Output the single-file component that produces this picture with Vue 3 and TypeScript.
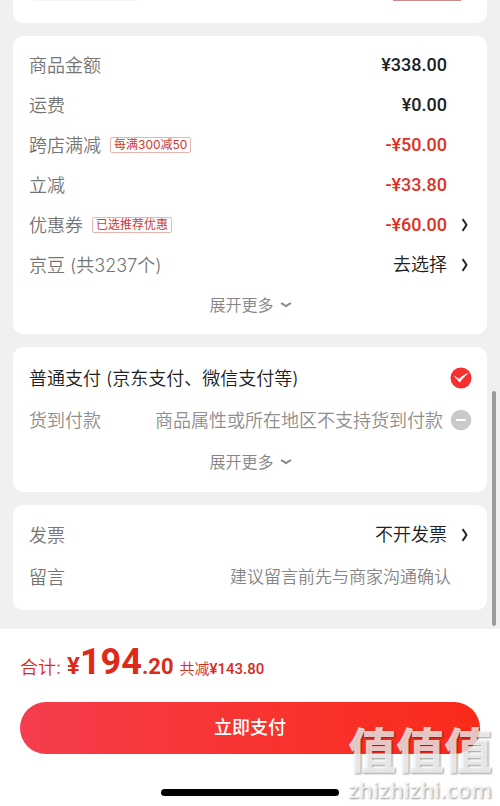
<script setup lang="ts">
import { ref } from 'vue'

interface PriceRow {
  label: string
  value: string
  badge?: string
  discount?: boolean
  link?: boolean
  plain?: boolean
}

const rows: PriceRow[] = [
  { label: '商品金额', value: '¥338.00' },
  { label: '运费', value: '¥0.00' },
  { label: '跨店满减', value: '-¥50.00', badge: '每满300减50', discount: true },
  { label: '立减', value: '-¥33.80', discount: true },
  { label: '优惠券', value: '-¥60.00', badge: '已选推荐优惠', discount: true, link: true },
  { label: '京豆 (共3237个)', value: '去选择', link: true, plain: true },
]

const payment = ref('online')
const message = ref('')
</script>

<template>
  <div class="page">
    <main class="content">
      <section class="card previous">
        <span class="field-edge"></span>
        <span class="action-edge"></span>
      </section>

      <section class="card prices">
        <div v-for="row in rows" :key="row.label" class="row">
          <span class="label">{{ row.label }}</span>
          <span v-if="row.badge" class="badge">{{ row.badge }}</span>
          <button v-if="row.link" type="button" class="value pick" :class="{ discount: row.discount, plain: row.plain }">
            <span>{{ row.value }}</span>
            <svg class="chevron" viewBox="0 0 8 14" aria-hidden="true"><path d="M1.5 1.2C3 3 4.4 5 5.4 7C4.4 9 3 11 1.5 12.8" /></svg>
          </button>
          <span v-else class="value" :class="{ discount: row.discount }">{{ row.value }}</span>
        </div>
        <button type="button" class="more">
          展开更多
          <svg class="down" viewBox="0 0 12 6" aria-hidden="true"><path d="M1 1.2C2.8 2 4.4 3 6 4.2C7.6 3 9.2 2 11 1.2" /></svg>
        </button>
      </section>

      <section class="card payments">
        <label class="row choice">
          <span class="method">普通支付 (京东支付、微信支付等)</span>
          <input v-model="payment" type="radio" name="payment" value="online" />
          <svg class="mark" viewBox="0 0 22 22" aria-hidden="true">
            <circle cx="11" cy="11" r="10.5" fill="#f6302f" />
            <path d="M4.6 9.6C6.6 10.6 8 11.4 9.2 12.4C11.4 10 14 8 17.6 6.6C14.4 9.4 11.8 12 9.6 15.2C8.2 13 6.6 11.2 4.6 9.6Z" fill="#fff" stroke="#fff" stroke-width=".7" />
          </svg>
        </label>
        <label class="row choice disabled">
          <span class="method">货到付款</span>
          <span class="method reason">商品属性或所在地区不支持货到付款</span>
          <input v-model="payment" type="radio" name="payment" value="cod" disabled />
          <svg class="mark" viewBox="0 0 22 22" aria-hidden="true">
            <circle cx="11" cy="11" r="10.3" fill="#cacaca" />
            <path d="M6.2 11H15.8" stroke="#fff" stroke-width="2" />
          </svg>
        </label>
        <button type="button" class="more">
          展开更多
          <svg class="down" viewBox="0 0 12 6" aria-hidden="true"><path d="M1 1.2C2.8 2 4.4 3 6 4.2C7.6 3 9.2 2 11 1.2" /></svg>
        </button>
      </section>

      <section class="card extras">
        <div class="row">
          <span class="label">发票</span>
          <button type="button" class="value pick plain">
            <span>不开发票</span>
            <svg class="chevron" viewBox="0 0 8 14" aria-hidden="true"><path d="M1.5 1.2C3 3 4.4 5 5.4 7C4.4 9 3 11 1.5 12.8" /></svg>
          </button>
        </div>
        <div class="row">
          <label class="label" for="message">留言</label>
          <input id="message" v-model="message" class="message" type="text" placeholder="建议留言前先与商家沟通确认" />
        </div>
      </section>

      <div class="scrollbar"></div>
    </main>

    <footer class="checkout">
      <p class="total">
        <span class="caption">合计:</span>
        <strong class="amount"><span class="yen">¥</span><span class="whole">194</span><span class="cents">.20</span></strong>
        <span class="saved">共减<b>¥143.80</b></span>
      </p>
      <button type="button" class="pay">立即支付</button>
      <div class="home"></div>
      <div class="watermark">
        <span class="seal">值值值</span>
        <span class="site">zhizhizhi.com</span>
      </div>
    </footer>
  </div>
</template>

<style>
body {
  margin: 0;
  background: #fff;
}
</style>

<style scoped>
.page {
  font-family: Inter, "Noto Sans CJK SC", sans-serif;
  font-size: 18px;
  font-weight: 350;
  line-height: 24px;
  color: #202020;
}

.page * {
  box-sizing: border-box;
}

button,
input {
  margin: 0;
  padding: 0;
  border: 0;
  background: none;
  font: inherit;
  color: inherit;
}

.content {
  position: relative;
  display: flex;
  flex-direction: column;
  gap: 13px;
  padding: 0 13px 19px;
  background: #f0f0f0;
}

.card {
  border-radius: 10px;
  background: #fff;
  padding: 9px 15px 9px 16px;
}

.previous {
  display: flex;
  justify-content: space-between;
  align-items: flex-start;
  border-radius: 0 0 10px 10px;
  padding: 0 26px 22px 20px;
}

.field-edge {
  width: 104px;
  height: 1px;
  background: #f5f5f5;
}

.action-edge {
  width: 68px;
  height: 1px;
  background: #d08a88;
}

.row {
  display: flex;
  align-items: center;
  height: 40px;
  white-space: nowrap;
}

.label,
.method {
  padding-top: 2px;
}

.label {
  color: #757575;
}

.badge {
  margin-left: 9px;
  padding: 0 3px;
  border: 1px solid #e9b5b0;
  border-radius: 2px;
  color: #cf3a30;
  font-size: 12px;
  font-weight: 400;
  line-height: 14px;
}

.value {
  margin-left: auto;
  padding-right: 25px;
  font-family: Roboto, "Noto Sans CJK SC", sans-serif;
  font-weight: 500;
}

.pick {
  display: flex;
  align-items: center;
  gap: 14px;
  padding-right: 3px;
}

.plain {
  font-weight: 350;
}

.discount {
  color: #e1301d;
}

.chevron {
  width: 8px;
  height: 14px;
  fill: none;
  stroke: #262626;
  stroke-width: 2;
}

.more {
  display: flex;
  align-items: center;
  justify-content: center;
  gap: 6px;
  width: 100%;
  height: 40px;
  color: #858585;
  font-size: 16px;
}

.down {
  width: 12px;
  height: 6px;
  fill: none;
  stroke: #888;
  stroke-width: 2;
}

.payments .row,
.payments .more,
.extras .row {
  height: 42px;
}

.payments {
  padding-top: 10px;
}

.choice {
  position: relative;
  gap: 7px;
}

.choice input {
  position: absolute;
  right: 0;
  width: 22px;
  height: 22px;
  opacity: 0;
}

.choice .mark {
  width: 22px;
  height: 22px;
  margin-left: auto;
}

.disabled {
  color: #8e8e8e;
}

.disabled .reason {
  margin-left: auto;
}

.disabled .mark {
  margin-left: 0;
}

.extras {
  padding-bottom: 12px;
}

.message {
  flex: 1;
  min-width: 0;
  padding-right: 21px;
  text-align: right;
  font-size: 17px;
}

.message::placeholder {
  color: #858585;
  opacity: 1;
}

.scrollbar {
  position: absolute;
  right: 4px;
  bottom: 3px;
  width: 4px;
  height: 235px;
  border-radius: 2px;
  background: #9b9b9b;
}

.checkout {
  position: relative;
  padding: 13px 20px 10px;
  background: #fff;
}

.total {
  display: flex;
  align-items: baseline;
  gap: 6px;
  margin: 0 0 13px;
  color: #dc2a1b;
  line-height: 40px;
  white-space: nowrap;
}

.amount {
  font-family: Roboto, sans-serif;
  font-weight: 700;
}

.yen {
  font-size: 24px;
}

.whole {
  font-size: 36px;
}

.cents {
  font-size: 22px;
}

.saved {
  font-size: 15px;
}

.saved b {
  font-family: Roboto, sans-serif;
  font-weight: 500;
}

.pay {
  display: block;
  width: 100%;
  height: 52px;
  border-radius: 26px;
  background: linear-gradient(90deg, #f53d4d, #f8332f 55%, #fa2a19);
  color: #fff;
  font-weight: 500;
}

.home {
  width: 178px;
  height: 7px;
  margin: 35px auto 0;
  border-radius: 4px;
  background: #000;
}

.watermark {
  position: absolute;
  right: 8px;
  bottom: 4px;
  display: flex;
  flex-direction: column;
  align-items: center;
  color: rgba(255, 255, 255, 0.75);
  text-shadow: 1px 1px 2px rgba(0, 0, 0, 0.4);
  white-space: nowrap;
  pointer-events: none;
}

.seal {
  font-size: 48px;
  line-height: 50px;
  font-weight: 900;
}

.site {
  font-family: "Open Sans", sans-serif;
  font-size: 22px;
  line-height: 26px;
  font-weight: 600;
}
</style>
